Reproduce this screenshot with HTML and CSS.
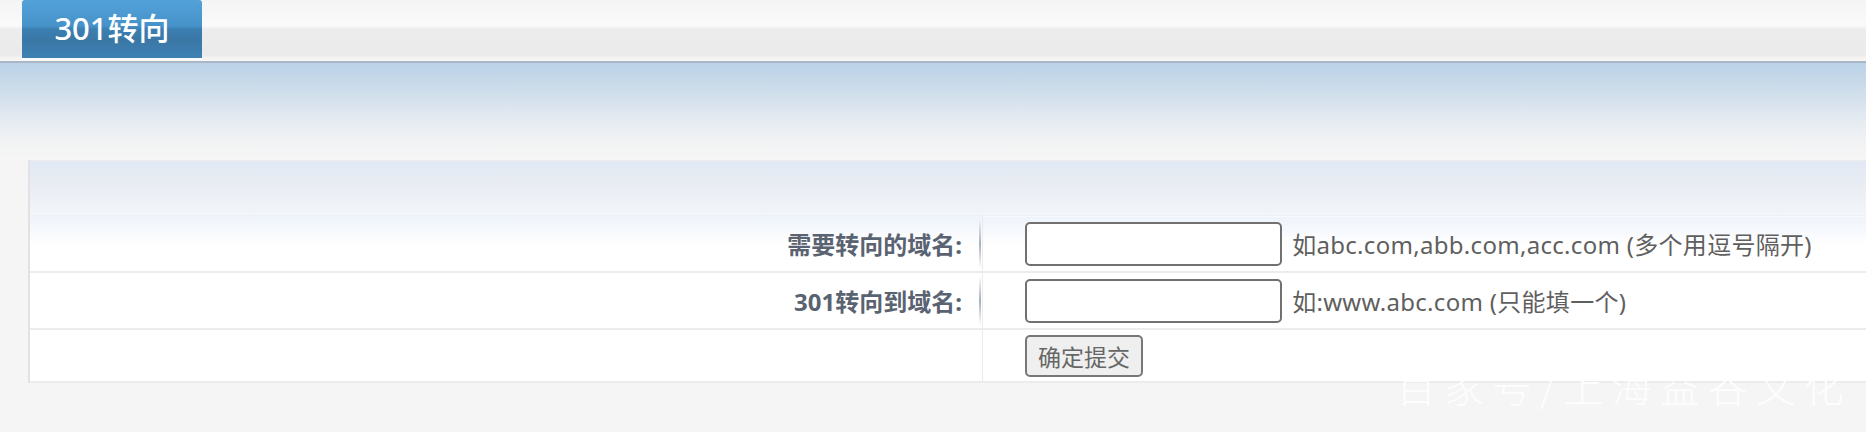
FILE: index.html
```html
<!DOCTYPE html>
<html lang="zh-CN">
<head>
    <meta charset="UTF-8">
    <title>301转向</title>
    <link rel="stylesheet" href="styles.css">
</head>
<body>
    <div class="nav">
        <div class="tab">301转向</div>
    </div>
    <div class="banner"></div>

    <div class="panel">
        <div class="panel-head"></div>
        <form id="redirect-form">
            <table class="form-table">
                <tr class="first">
                    <td class="label">需要转向的域名:</td>
                    <td class="field">
                        <input type="text" name="from" class="text-input">
                        <span class="hint">如abc.com,abb.com,acc.com (多个用逗号隔开)</span>
                    </td>
                </tr>
                <tr>
                    <td class="label">301转向到域名:</td>
                    <td class="field">
                        <input type="text" name="to" class="text-input">
                        <span class="hint">如:www.abc.com (只能填一个)</span>
                    </td>
                </tr>
                <tr class="last">
                    <td class="label empty"></td>
                    <td class="field">
                        <button type="submit" class="btn">确定提交</button>
                    </td>
                </tr>
            </table>
        </form>
    </div>

    <div class="watermark">百家号/上海益谷文化</div>
</body>
</html>
```

FILE: styles.css
```css
body {
    margin: 0;
    padding: 0;
    background: #f5f5f5;
    font-family: "Noto Sans", "Noto Sans CJK SC", sans-serif;
    overflow: hidden;
    position: relative;
    min-height: 432px;
}
.nav {
    height: 61px;
    padding-left: 22px;
    background: linear-gradient(to bottom, #f4f4f4 0, #fafafa 26px, #ececec 29px, #ebebeb 55px, #f5f4f1 58px, #f7f7f7 61px);
    border-bottom: 2px solid #aab7c6;
}
.tab {
    width: 180px;
    height: 58px;
    box-sizing: border-box;
    padding-top: 4px;
    text-align: center;
    color: #fff;
    font-size: 31px;
    font-weight: 500;
    border-radius: 3px 3px 0 0;
    background: linear-gradient(to bottom, #52a2d9 0, #4692c9 26px, #3b7fb2 29px, #3a77a5 40px, #3e81b4 58px);
    box-shadow: 0 2px 0 #fbfbfb;
}
.banner {
    height: 97px;
    background: linear-gradient(to bottom, #bbd2e8 0, #c8dae9 20px, #e4eaf2 55px, #f2f3f4 80px, #f6f6f6 97px);
}
.panel {
    margin-left: 28px;
    margin-right: -20px;
    border-left: 2px solid #e2e2e2;
    border-top: 1px solid #efebeb;
}
.panel-head {
    height: 54px;
    background: linear-gradient(to bottom, #e1e9f5 0, #e8ecf2 20px, #f2f5fa 54px);
}
.form-table {
    width: 100%;
    border-collapse: collapse;
}
.form-table tr {
    border-top: 2px solid #ececec;
}
.form-table tr.first {
    border-top: 1px solid #eef0f3;
}
.form-table tr.last {
    border-bottom: 2px solid #ececec;
}
.form-table td {
    height: 55px;
    padding: 0;
    background: #fff;
}
.form-table tr.last td {
    height: 51px;
}
.form-table tr.first td {
    background: linear-gradient(to bottom, #eef3fa 0, #fbfcfe 22px, #fff 30px);
}
.label {
    width: 932px;
    padding-right: 20px !important;
    text-align: right;
    font-size: 24px;
    font-weight: 700;
    color: #5a6371;
    border-right: 1px solid #ebebeb;
}
.form-table tr td.label {
    background-image: linear-gradient(to bottom, rgba(160,170,188,0) 0, #a6afbf 50%, rgba(160,170,188,0) 100%);
    background-repeat: no-repeat;
    background-position: right 1px center;
    background-size: 2px 90%;
}
.form-table tr.first td.label {
    background-image: linear-gradient(to bottom, rgba(160,170,188,0) 0, #a6afbf 50%, rgba(160,170,188,0) 100%), linear-gradient(to bottom, #eef3fa 0, #fbfcfe 22px, #fff 30px);
    background-repeat: no-repeat, no-repeat;
    background-position: right 1px center, 0 0;
    background-size: 2px 90%, 100% 100%;
}
.form-table tr.last td.label {
    background-image: none;
}
.field {
    padding-left: 42px !important;
    white-space: nowrap;
}
.text-input {
    width: 257px;
    height: 44px;
    box-sizing: border-box;
    border: 2px solid #717171;
    border-radius: 5px;
    background: #fff;
    vertical-align: middle;
    margin: 0;
}
.hint {
    margin-left: 6px;
    font-size: 24px;
    letter-spacing: 0.3px;
    color: #5f5f5f;
    vertical-align: middle;
}
.btn {
    width: 118px;
    height: 42px;
    padding: 0;
    font-family: "Noto Sans CJK SC", sans-serif;
    font-size: 23px;
    color: #666;
    background: #efefef;
    border: 2px solid #777;
    border-radius: 5px;
    vertical-align: middle;
    cursor: pointer;
}
.watermark {
    position: absolute;
    left: 1396px;
    top: 356px;
    font-size: 40px;
    letter-spacing: 8px;
    color: rgba(255,255,255,0.9);
    font-family: "Noto Sans CJK SC", sans-serif;
    font-weight: 300;
    white-space: nowrap;
}
```
